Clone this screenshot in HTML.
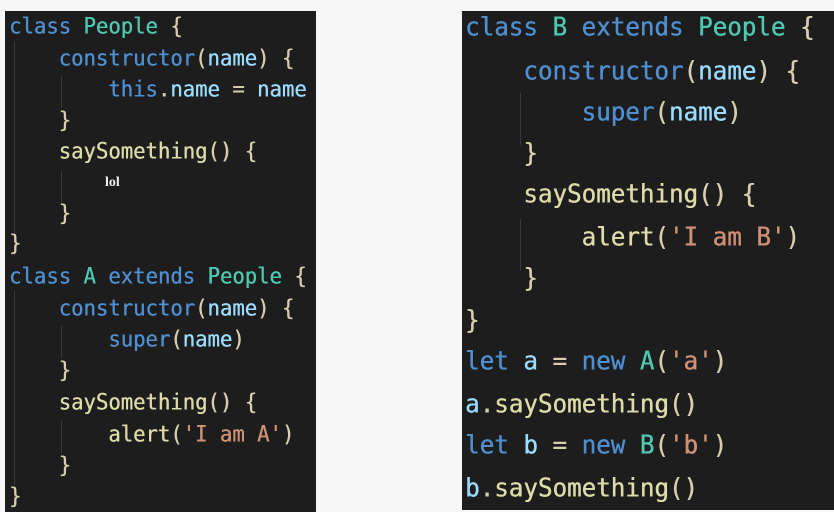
<!DOCTYPE html><html><head><style>
body{margin:0;width:834px;height:512px;background:#f7f7f7;position:relative;overflow:hidden}
.p{position:absolute;background:#1d1d1d}
.l{position:absolute;white-space:pre;font-family:"DejaVu Sans Mono","Liberation Mono",monospace;color:#d4cfb0;line-height:1;text-shadow:0.4px 0 0 currentColor}
.L .l{font-size:20.6px;transform:scaleY(1.08)}
.R .l{font-size:24.2px;transform:scaleY(1.08)}
.k{color:#4f8fd0}.c{color:#4ec9b0}.v{color:#9cdcfe}.f{color:#dcdcaa}.s{color:#ce9178}
.g{position:absolute;width:1px;background:#3a3a3a}
</style></head><body>
<div class="p L" style="left:5px;top:11px;width:311px;height:501px">
<div class="g" style="left:9px;top:30px;height:215px"></div>
<div class="g" style="left:56px;top:65px;height:32px"></div>
<div class="g" style="left:56px;top:160px;height:32px"></div>
<div class="g" style="left:9px;top:280px;height:215px"></div>
<div class="g" style="left:56px;top:315px;height:32px"></div>
<div class="g" style="left:56px;top:410px;height:32px"></div>
<div class="l" style="left:4px;top:5px"><span class="k">class</span> <span class="c">People</span> {</div>
<div class="l" style="left:4px;top:37px">    <span class="k">constructor</span>(<span class="v">name</span>) {</div>
<div class="l" style="left:4px;top:68px">        <span class="k">this</span>.<span class="v">name</span> = <span class="v">name</span></div>
<div class="l" style="left:4px;top:99px">    }</div>
<div class="l" style="left:4px;top:130px">    <span class="f">saySomething</span>() {</div>
<div style="position:absolute;left:100px;top:164px;font:bold 14px 'Liberation Serif',serif;color:#eee">lol</div>
<div class="l" style="left:4px;top:192px">    }</div>
<div class="l" style="left:4px;top:222px">}</div>
<div class="l" style="left:4px;top:255px"><span class="k">class</span> <span class="c">A</span> <span class="k">extends</span> <span class="c">People</span> {</div>
<div class="l" style="left:4px;top:287px">    <span class="k">constructor</span>(<span class="v">name</span>) {</div>
<div class="l" style="left:4px;top:318px">        <span class="k">super</span>(<span class="v">name</span>)</div>
<div class="l" style="left:4px;top:349px">    }</div>
<div class="l" style="left:4px;top:381px">    <span class="f">saySomething</span>() {</div>
<div class="l" style="left:4px;top:413px">        <span class="f">alert</span>(<span class="s">'I am A'</span>)</div>
<div class="l" style="left:4px;top:444px">    }</div>
<div class="l" style="left:4px;top:475px">}</div>
</div>
<div class="p R" style="left:462px;top:11px;width:372px;height:499px">
<div class="g" style="left:58px;top:82px;height:52px"></div>
<div class="g" style="left:58px;top:208px;height:52px"></div>
<div class="l" style="left:3px;top:4px"><span class="k">class</span> <span class="c">B</span> <span class="k">extends</span> <span class="c">People</span> {</div>
<div class="l" style="left:3px;top:48px">    <span class="k">constructor</span>(<span class="v">name</span>) {</div>
<div class="l" style="left:3px;top:89px">        <span class="k">super</span>(<span class="v">name</span>)</div>
<div class="l" style="left:3px;top:130px">    }</div>
<div class="l" style="left:3px;top:171px">    <span class="f">saySomething</span>() {</div>
<div class="l" style="left:3px;top:214px">        <span class="f">alert</span>(<span class="s">'I am B'</span>)</div>
<div class="l" style="left:3px;top:255px">    }</div>
<div class="l" style="left:3px;top:297px">}</div>
<div class="l" style="left:3px;top:338px"><span class="k">let</span> <span class="v">a</span> = <span class="k">new</span> <span class="c">A</span>(<span class="s">'a'</span>)</div>
<div class="l" style="left:3px;top:381px"><span class="v">a</span>.<span class="f">saySomething</span>()</div>
<div class="l" style="left:3px;top:422px"><span class="k">let</span> <span class="v">b</span> = <span class="k">new</span> <span class="c">B</span>(<span class="s">'b'</span>)</div>
<div class="l" style="left:3px;top:465px"><span class="v">b</span>.<span class="f">saySomething</span>()</div>
</div>
</body></html>
